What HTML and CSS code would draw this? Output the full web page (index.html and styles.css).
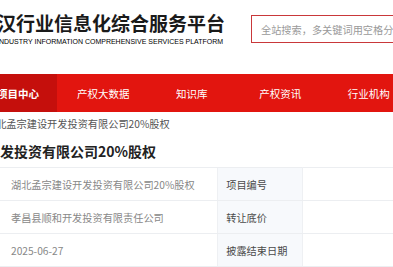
FILE: index.html
```html
<!DOCTYPE html>
<html lang="zh-CN">
<head>
<meta charset="utf-8">
<title>项目中心</title>
<link rel="stylesheet" href="styles.css">
</head>
<body>
<header class="header">
  <div class="logo">
    <div class="logo-cn">汉行业信息化综合服务平台</div>
    <div class="logo-en">INDUSTRY INFORMATION COMPREHENSIVE SERVICES PLATFORM</div>
  </div>
  <div class="search">
    <input class="search-input" type="text" placeholder="全站搜索，多关键词用空格分隔">
  </div>
</header>
<nav class="nav">
  <a class="nav-item active">项目中心</a>
  <a class="nav-item">产权大数据</a>
  <a class="nav-item">知识库</a>
  <a class="nav-item">产权资讯</a>
  <a class="nav-item">行业机构</a>
</nav>
<div class="crumb">湖北孟宗建设开发投资有限公司20%股权</div>
<h1 class="title">湖北孟宗建设开发投资有限公司20%股权</h1>
<table class="info">
  <tr>
    <td class="val">湖北孟宗建设开发投资有限公司20%股权</td>
    <td class="lab">项目编号</td>
    <td class="val"></td>
  </tr>
  <tr>
    <td class="val">孝昌县顺和开发投资有限责任公司</td>
    <td class="lab">转让底价</td>
    <td class="val"></td>
  </tr>
  <tr>
    <td class="val">2025-06-27</td>
    <td class="lab">披露结束日期</td>
    <td class="val"></td>
  </tr>
</table>
</body>
</html>
```
FILE: styles.css
```css
html, body {
  margin: 0;
  padding: 0;
  background: #fff;
  overflow: hidden;
  font-family: "Noto Sans CJK SC", "Noto Sans", sans-serif;
}
body {
  width: 393px;
  height: 267px;
}
.header {
  display: flex;
  align-items: center;
  height: 58px;
}
.logo {
  flex: none;
  width: 254px;
  margin-left: -3px;
}
.logo-cn {
  font-size: 19px;
  font-weight: 700;
  line-height: 24px;
  color: #1a1a1a;
  white-space: nowrap;
}
.logo-en {
  margin-top: 2px;
  font-family: "Liberation Sans", Arial, sans-serif;
  font-size: 7px;
  line-height: 10px;
  color: #000;
  white-space: nowrap;
}
.search {
  flex: none;
  width: 220px;
}
.search-input {
  box-sizing: border-box;
  width: 220px;
  height: 28px;
  border: 1px solid #c9383a;
  padding: 0 9px;
  font-family: "Noto Sans CJK SC", sans-serif;
  font-size: 10.2px;
  color: #999;
  outline: none;
}
.search-input::placeholder {
  color: #9a9a9a;
}
.nav {
  display: flex;
  margin-top: 16px;
  margin-left: -21px;
  height: 38px;
  background: #e2150f;
  white-space: nowrap;
}
.nav-item {
  flex: none;
  width: 88.5px;
  display: flex;
  align-items: center;
  justify-content: center;
  font-size: 10.5px;
  color: #fff;
}
.nav-item.active {
  width: 78px;
  margin-right: 2px;
  background: #c50f0c;
  font-weight: 700;
}
.crumb {
  margin-left: -14px;
  height: 24px;
  line-height: 24px;
  font-size: 10.2px;
  color: #555;
  white-space: nowrap;
}
.title {
  margin: 2px 0 3px -98px;
  font-size: 14px;
  line-height: 26px;
  font-weight: 700;
  color: #222;
  white-space: nowrap;
}
.info {
  border-collapse: collapse;
  margin-left: 0;
  table-layout: fixed;
}
.info td {
  height: 32px;
  padding: 0;
  border-top: 1px solid #eceef1;
  border-bottom: 1px solid #eceef1;
  font-size: 10.2px;
  white-space: nowrap;
  vertical-align: middle;
}
.info .val {
  width: 257px;
  padding-left: 11px;
  color: #888;
}
.info .lab {
  width: 109px;
  padding-left: 8px;
  background: #f7f9fc;
  color: #4a4a4a;
  border-left: 1px solid #eef0f3;
  border-right: 1px solid #eef0f3;
}
```
